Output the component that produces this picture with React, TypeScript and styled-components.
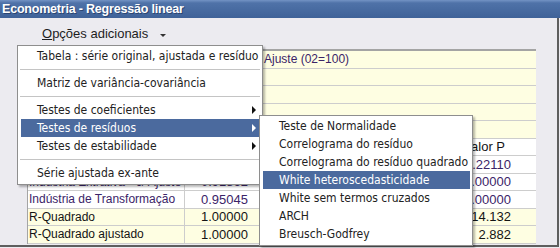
import styled, { createGlobalStyle } from "styled-components";

const GlobalStyle = createGlobalStyle`
  html, body {
    margin: 0;
    padding: 0;
    background: #ecebf0;
  }
  body {
    width: 560px;
    height: 248px;
    overflow: hidden;
  }
`;

const Screen = styled.div`
  width: 560px;
  height: 248px;
  display: flex;
  flex-direction: column;
  background: #ecebf0;
  font-family: "Liberation Sans", Arial, sans-serif;
`;

const TitleBar = styled.div`
  height: 18px;
  display: flex;
  align-items: center;
  padding-left: 2px;
  background: linear-gradient(#7393c4 0, #4f72a8 3px, #3f6298 100%);
  color: #fff;
  font-weight: bold;
  font-size: 12.5px;
  letter-spacing: -0.2px;
  text-shadow: 1px 1px 0 #2b4572;
`;

const Body = styled.div`
  position: relative;
  width: 557px;
  height: 227px;
  border-right: 2px solid #5e5e5e;
  border-bottom: 2px solid #5e5e5e;
  display: flex;
  flex-direction: column;
`;

const Toolbar = styled.div`
  height: 31px;
  display: flex;
  align-items: center;
  padding-left: 42px;
  font-size: 13px;
  color: #1e1e1e;
`;

const Hotkey = styled.span`
  text-decoration: underline;
`;

const DropArrow = styled.span`
  margin-left: 12px;
  margin-top: 3px;
  border-left: 3px solid transparent;
  border-right: 3px solid transparent;
  border-top: 3px solid #333;
`;

const Table = styled.div`
  margin-left: 27px;
  width: 508px;
  border-top: 2px solid #a4a4a4;
  border-left: 1px solid #a4a4a4;
  display: flex;
  flex-direction: column;
  font-size: 12px;
`;

const Row = styled.div<{ $yellow?: boolean; $dark?: boolean }>`
  display: grid;
  grid-template-columns: 157px 77px 1fr 54px 22px;
  background: ${(p) => (p.$yellow ? "#fefee2" : "#ffffff")};
  color: ${(p) => (p.$dark ? "#141414" : "#3b2468")};
  border-bottom: 1px solid #cdcdcd;
  height: 17px;
  line-height: 17px;
  &:nth-child(even) {
    height: 16px;
    line-height: 16px;
  }
`;

const Banner = styled(Row)`
  display: block;
  padding-left: 236px;
`;

const Label = styled.div`
  padding-left: 1px;
  white-space: nowrap;
  overflow: hidden;
  border-right: 1px solid #cdcdcd;
`;

const Num = styled.div<{ $pad?: number }>`
  font-size: 13px;
  text-align: right;
  padding-right: ${(p) => p.$pad ?? 3}px;
  white-space: nowrap;
`;

const Head = styled.div`
  font-size: 13px;
  text-align: right;
  padding-right: 9px;
  white-space: nowrap;
  color: #141414;
`;

const Cell = styled.div``;

const Menu = styled.div<{ $top: number; $left: number; $width: number }>`
  position: absolute;
  top: ${(p) => p.$top}px;
  left: ${(p) => p.$left}px;
  width: ${(p) => p.$width}px;
  background: #fff;
  border: 1px solid #8e8e8e;
  box-shadow: 2px 2px 2px rgba(0, 0, 0, 0.28);
  padding: 1px 0 2px;
  font-family: "DejaVu Sans Condensed", "DejaVu Sans", sans-serif;
  font-size: 12px;
  color: #222;
  z-index: 2;
`;

const Item = styled.div<{ $active?: boolean }>`
  position: relative;
  height: 18px;
  line-height: 18px;
  margin: 0 2px 0 3px;
  padding-left: 16px;
  white-space: nowrap;
  background: ${(p) => (p.$active ? "#4b6a9e" : "transparent")};
  color: ${(p) => (p.$active ? "#fff" : "#222")};
`;

const SubArrow = styled.span<{ $active?: boolean }>`
  position: absolute;
  right: 4px;
  top: 5px;
  border-top: 4px solid transparent;
  border-bottom: 4px solid transparent;
  border-left: 4px solid ${(p) => (p.$active ? "#fff" : "#111")};
`;

const Separator = styled.div`
  height: 9px;
  margin: 0 2px;
  display: flex;
  align-items: center;
  &::after {
    content: "";
    flex: 1;
    height: 1px;
    background: #c4c4c4;
  }
`;

const mainItems: (string | null)[] = [
  "Tabela : série original, ajustada e resíduo",
  null,
  "Matriz de variância-covariância",
  null,
  "Testes de coeficientes>",
  "Testes de resíduos>",
  "Testes de estabilidade>",
  null,
  "Série ajustada ex-ante",
];

const subItems = [
  "Teste de Normalidade",
  "Correlograma do resíduo",
  "Correlograma do resíduo quadrado",
  "White heteroscedasticidade",
  "White sem termos cruzados",
  "ARCH",
  "Breusch-Godfrey",
];

const rows = [
  { label: "Indústria Extrativa - c/ Ajuste", v: "0.91862", p: "0.22110" },
  { label: "Indústria Extrativa - c/ Ajuste", v: "0.91862", p: "0.00000" },
  { label: "Indústria de Transformação", v: "0.95045", p: "0.00000" },
];

export default function App() {
  return (
    <Screen>
      <GlobalStyle />
      <TitleBar>Econometria - Regressão linear</TitleBar>
      <Body>
        <Toolbar>
          <Hotkey>O</Hotkey>pções adicionais
          <DropArrow />
        </Toolbar>
        <Table>
          <Banner $yellow>Ajuste (02=100)</Banner>
          <Banner $yellow />
          <Banner $yellow />
          <Banner $yellow />
          <Banner $yellow />
          <Row>
            <Label>Variável</Label>
            <Cell />
            <Cell />
            <Head>Valor P</Head>
            <Cell />
          </Row>
          {rows.map((r, i) => (
            <Row key={i}>
              <Label>{r.label}</Label>
              <Num $pad={14}>{r.v}</Num>
              <Cell />
              <Num>{r.p}</Num>
              <Cell />
            </Row>
          ))}
          <Row $yellow $dark>
            <Label>R-Quadrado</Label>
            <Num $pad={14}>1.00000</Num>
            <Cell />
            <Num>14.132</Num>
            <Cell />
          </Row>
          <Row $yellow $dark>
            <Label>R-Quadrado ajustado</Label>
            <Num $pad={14}>1.00000</Num>
            <Cell />
            <Num>2.882</Num>
            <Cell />
          </Row>
        </Table>

        <Menu $top={27} $left={17} $width={244}>
          {mainItems.map((m, i) => {
            if (m === null) return <Separator key={i} />;
            const sub = m.endsWith(">");
            const text = sub ? m.slice(0, -1) : m;
            const active = text === "Testes de resíduos";
            return (
              <Item key={i} $active={active}>
                {text}
                {sub && <SubArrow $active={active} />}
              </Item>
            );
          })}
        </Menu>

        <Menu $top={97} $left={259} $width={212}>
          {subItems.map((s) => (
            <Item key={s} $active={s === "White heteroscedasticidade"}>
              {s}
            </Item>
          ))}
        </Menu>
      </Body>
    </Screen>
  );
}
